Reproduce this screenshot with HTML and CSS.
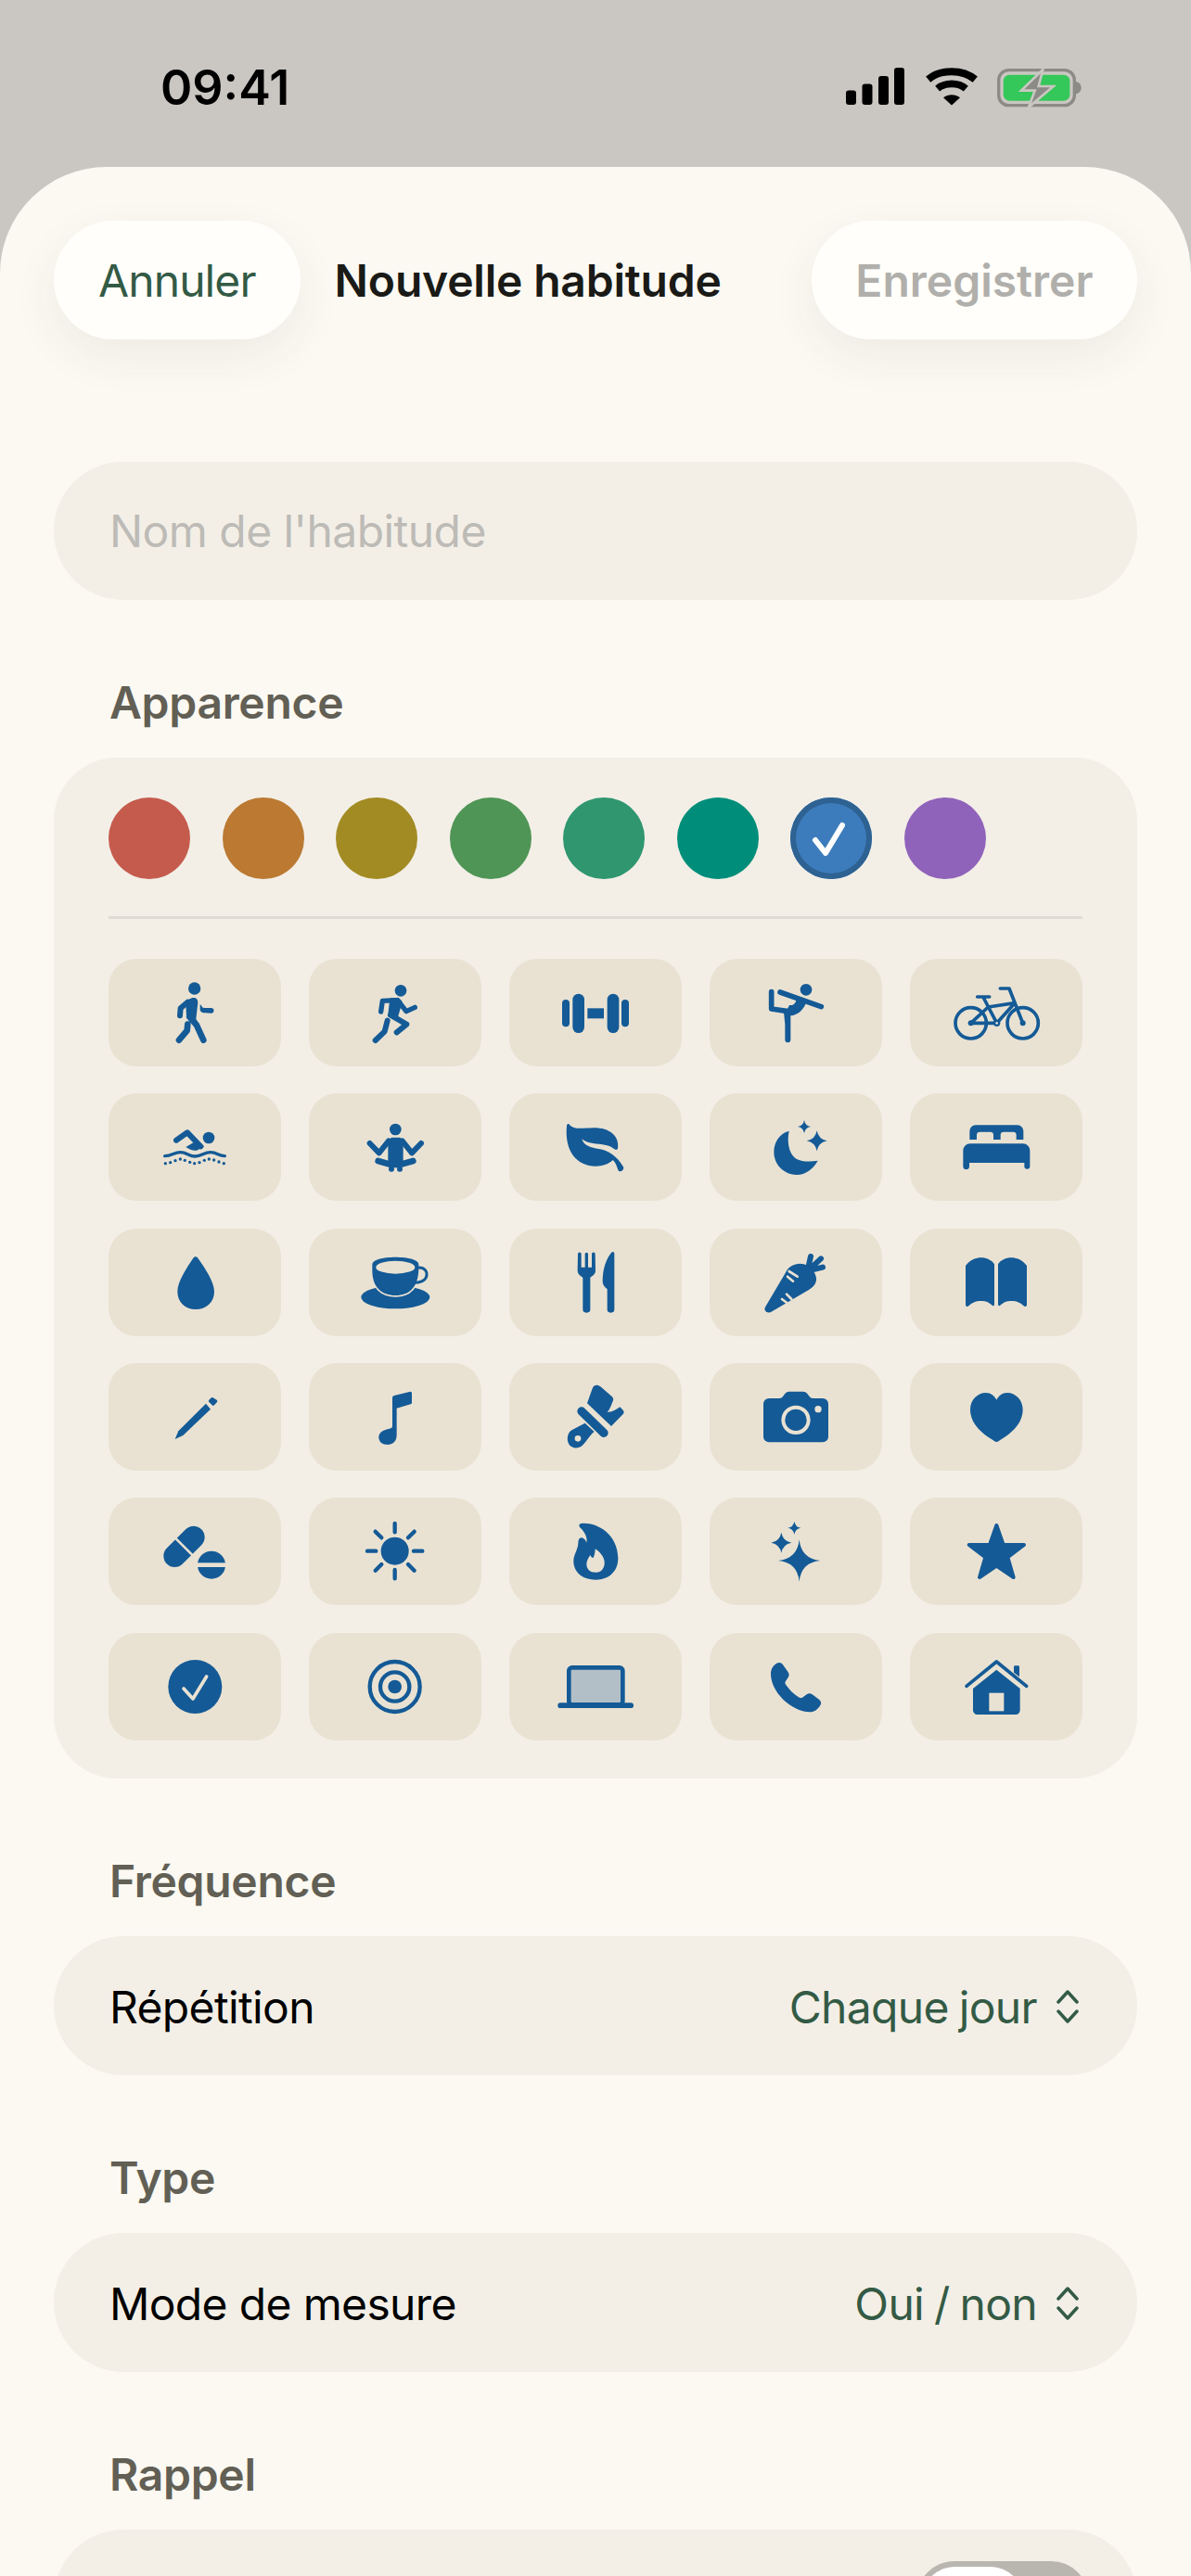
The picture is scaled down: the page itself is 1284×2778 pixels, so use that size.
FILE: index.html
```html
<!DOCTYPE html>
<html lang="fr">
<head>
    <meta charset="UTF-8">
    <meta name="viewport" content="width=device-width, initial-scale=1.0">
    <title>Nouvelle habitude</title>
    <link rel="stylesheet" href="styles.css">
</head>
<body>
    <div class="status-bar">
        <span class="time">09:41</span>
        <div class="status-icons">
            <svg class="signal" viewBox="0 0 63 40" fill="#000">
                <rect x="0" y="24.5" width="11" height="15.5" rx="3"/>
                <rect x="17.5" y="17.5" width="11" height="22.5" rx="3"/>
                <rect x="35" y="9" width="11" height="31" rx="3"/>
                <rect x="52" y="0" width="11" height="40" rx="3"/>
            </svg>
            <svg class="wifi" viewBox="0 0 168 122">
                <path d="M8 38C48 4 120 4 160 38" fill="none" stroke="#000" stroke-width="24"/>
                <path d="M38 68C62 47 106 47 130 68" fill="none" stroke="#000" stroke-width="23"/>
                <path d="M57 97C72 85 96 85 111 97L84 122Z" fill="#000"/>
            </svg>
            <svg class="battery" viewBox="0 0 272 130">
                <rect x="5" y="8" width="245" height="114" rx="32" fill="none" stroke="#8b8a86" stroke-width="10"/>
                <rect x="20" y="23" width="215" height="84" rx="20" fill="#34c759"/>
                <path d="M255 45C267 48 272 56 272 65C272 74 267 82 255 85Z" fill="#8b8a86"/>
                <path d="M148 6L78 74H122L102 128L182 60H134Z" fill="#8b8a86" stroke="#cac7c2" stroke-width="8"/>
            </svg>
        </div>
    </div>

    <main class="sheet">
        <header class="nav">
            <button class="pill-btn cancel">Annuler</button>
            <h1 class="nav-title">Nouvelle habitude</h1>
            <button class="pill-btn save">Enregistrer</button>
        </header>

        <div class="name-field">Nom de l'habitude</div>

        <section class="group">
            <h2 class="group-label">Apparence</h2>
            <div class="card">
                <div class="swatches">
                    <span class="swatch red"></span>
                    <span class="swatch orange"></span>
                    <span class="swatch olive"></span>
                    <span class="swatch green"></span>
                    <span class="swatch emerald"></span>
                    <span class="swatch teal"></span>
                    <span class="swatch blue selected">
                        <svg viewBox="0 0 88 88"><path d="M27 46L38 60L56 30" fill="none" stroke="#fff" stroke-width="6" stroke-linecap="round" stroke-linejoin="round"/></svg>
                    </span>
                    <span class="swatch purple"></span>
                </div>
                <div class="divider"></div>
                <div class="icon-grid">
                    <!-- walk -->
                    <div class="tile"><svg viewBox="0 0 558 348">
                        <circle cx="278" cy="96" r="20"/>
                        <path d="M250 145C256 124 290 116 289 142L283 195L294 212L272 208L252 186Z"/>
                        <path class="ln" stroke-width="20" d="M262 188L285 215L307 263"/>
                        <path class="ln" stroke-width="20" d="M256 212L254 232L228 263"/>
                        <path class="ln" stroke-width="18" d="M256 140L233 160L231 184"/>
                        <path d="M296 146L305 158C312 160 325 159 332 159A8.5 8.5 0 0 1 332 176L312 175C300 175 295 170 296 160Z"/>
                    </svg></div>
                    <!-- run -->
                    <div class="tile"><svg viewBox="0 0 558 348">
                        <circle cx="297" cy="103" r="19"/>
                        <path d="M262 127L285 127C292 127 298 132 302 140L288 188L256 180Z"/>
                        <path class="ln" stroke-width="16" d="M284 134L238 136L233 171"/>
                        <path class="ln" stroke-width="16" d="M287 134L315 170L343 157"/>
                        <path class="ln" stroke-width="18" d="M264 182L316 212L284 238"/>
                        <path class="ln" stroke-width="18" d="M254 200L245 235L215 264"/>
                    </svg></div>
                    <!-- dumbbell -->
                    <div class="tile"><svg viewBox="0 0 558 348">
                        <rect x="171" y="132" width="24" height="88" rx="12"/>
                        <rect x="205" y="113" width="38" height="127" rx="19"/>
                        <rect x="253" y="160" width="53" height="33"/>
                        <rect x="317" y="113" width="38" height="127" rx="19"/>
                        <rect x="363" y="132" width="24" height="88" rx="12"/>
                    </svg></div>
                    <!-- yoga -->
                    <div class="tile"><svg viewBox="0 0 558 348">
                        <circle cx="312" cy="100" r="19"/>
                        <path class="ln" stroke-width="17" d="M228 108L361 155"/>
                        <path class="ln" stroke-width="17" d="M200 107L200 162L254 170"/>
                        <path d="M258 150C270 152 278 144 281 131L312 142C304 166 284 183 262 184L244 178Z"/>
                        <path d="M240 172L262 176V262A9 9 0 0 1 244 262V212Z"/>
                    </svg></div>
                    <!-- bike -->
                    <div class="tile"><svg viewBox="0 0 558 348">
                        <g class="ln" stroke-width="11">
                            <circle cx="197" cy="208" r="50"/>
                            <circle cx="365" cy="208" r="50"/>
                            <path d="M197 208H281L339 143L253 156L197 208"/>
                            <path d="M218 123H257M238 126L281 208"/>
                            <path d="M292 96H321L365 208"/>
                        </g>
                        <circle cx="197" cy="208" r="9"/>
                        <circle cx="365" cy="208" r="9"/>
                        <circle cx="281" cy="208" r="11"/>
                        <circle class="cut" cx="281" cy="208" r="4"/>
                    </svg></div>

                    <!-- swim -->
                    <div class="tile"><svg viewBox="0 0 558 348">
                        <circle cx="324" cy="144" r="19"/>
                        <path class="ln" stroke-width="18" d="M219 152L255 127L298 172"/>
                        <path d="M250 174L274 160L310 172L285 185C272 186 262 182 250 174Z"/>
                        <path class="ln" stroke-width="10" d="M182 203C205 203 212 191 232 191C254 191 260 204 280 204C302 204 308 191 330 191C352 191 355 203 376 203"/>
                        <g>
                            <circle cx="184" cy="227" r="5"/><circle cx="200" cy="224" r="5"/><circle cx="216" cy="218" r="5"/>
                            <circle cx="232" cy="213" r="5"/><circle cx="247" cy="217" r="5"/><circle cx="263" cy="223" r="5"/>
                            <circle cx="278" cy="227" r="5"/><circle cx="294" cy="224" r="5"/><circle cx="310" cy="217" r="5"/>
                            <circle cx="325" cy="213" r="5"/><circle cx="341" cy="216" r="5"/><circle cx="357" cy="222" r="5"/>
                            <circle cx="373" cy="227" r="5"/>
                        </g>
                    </svg></div>
                    <!-- meditate -->
                    <div class="tile"><svg viewBox="0 0 558 348">
                        <circle cx="280" cy="117" r="19"/>
                        <path d="M256 158C256 150 262 143 272 143H290C300 143 305 150 305 158V232H256Z"/>
                        <path class="ln" stroke-width="18" d="M197 162L227 193L258 154"/>
                        <path class="ln" stroke-width="18" d="M363 162L333 193L302 154"/>
                        <path class="ln" stroke-width="20" d="M224 219L266 231H294L337 219"/>
                        <circle cx="267" cy="245" r="9"/>
                        <circle cx="294" cy="245" r="9"/>
                    </svg></div>
                    <!-- leaf -->
                    <div class="tile"><svg viewBox="0 0 558 348">
                        <path d="M195 101C207 118 235 113 270 112C320 110 358 135 351 180C345 188 335 174 322 170C310 166 300 165 290 164C265 162 245 158 235 147C240 170 265 176 290 180C320 184 350 205 369 238C373 250 358 258 352 248C347 235 345 225 335 216C320 230 300 236 280 236C220 236 178 190 186 105C187 99 192 98 195 101Z"/>
                    </svg></div>
                    <!-- moon -->
                    <div class="tile"><svg viewBox="0 0 558 348">
                        <path d="M257 122C225 130 208 160 208 190C208 235 245 264 282 264C310 264 335 245 350 218C325 222 300 222 280 212C255 195 250 155 257 122Z"/>
                        <path d="M306 87Q309 105 327 108Q309 111 306 129Q303 111 285 108Q303 105 306 87Z"/>
                        <path d="M347 121Q352 149 380 154Q352 159 347 187Q342 159 314 154Q342 149 347 121Z"/>
                    </svg></div>
                    <!-- bed -->
                    <div class="tile"><svg viewBox="0 0 558 348">
                        <path d="M193 150V122A19 19 0 0 1 212 103H348A19 19 0 0 1 367 122V150H344V135A10 10 0 0 0 334 125H303A10 10 0 0 0 293 135V150H270V135A10 10 0 0 0 260 125H226A10 10 0 0 0 216 135V150Z"/>
                        <path d="M172 185A22 22 0 0 1 194 163H366A22 22 0 0 1 388 185V236A9 9 0 0 1 370 236V225H192V236A10 10 0 0 1 172 236Z"/>
                    </svg></div>

                    <!-- drop -->
                    <div class="tile"><svg viewBox="0 0 558 348">
                        <path d="M274 95A9 9 0 0 1 289 95C310 125 342 170 342 203C342 238 316 261 282 261C248 261 223 238 223 203C223 170 254 125 274 95Z"/>
                    </svg></div>
                    <!-- cup -->
                    <div class="tile"><svg viewBox="0 0 558 348">
                        <ellipse cx="280" cy="222" rx="111" ry="37"/>
                        <path class="halo" d="M205 116C205 100 240 92 280 92C320 92 355 100 355 116V135C352 190 325 216 280 216C235 216 205 190 205 135Z"/>
                        <ellipse class="cut" cx="280" cy="125" rx="63" ry="21"/>
                        <path class="ln" stroke-width="9" d="M352 126C375 124 386 140 379 158C373 172 356 175 338 175"/>
                    </svg></div>
                    <!-- fork and knife -->
                    <div class="tile"><svg viewBox="0 0 558 348">
                        <path d="M222 82A5.5 5.5 0 0 1 233 82V125H245V82A5 5 0 0 1 255 82V125H267V82A5.5 5.5 0 0 1 278 82L279 135C279 148 270 152 262 158V262A12 10 0 0 1 238 262V158C230 152 221 148 221 135Z"/>
                        <path d="M330 78C335 73 340 75 340 82V262A11.500 10 0 0 1 317 262V195C310 190 302 182 302 170C302 130 315 95 330 78Z"/>
                    </svg></div>
                    <!-- carrot -->
                    <div class="tile"><svg viewBox="0 0 558 348">
                        <path class="ln" stroke-width="18" d="M320 122L327 90M330 125L360 97M335 132L366 125"/>
                        <path d="M181 252L247 140C258 118 290 105 317 120C335 130 350 155 344 172C340 185 330 192 322 197L202 268C188 278 172 265 181 252Z"/>
                        <path class="cut-ln" d="M252 155L270 170M257 138L284 155M234 228L250 240M249 212L265 228"/>
                    </svg></div>
                    <!-- book -->
                    <div class="tile"><svg viewBox="0 0 558 348">
                        <path d="M180 120C195 100 215 94 230 94C248 94 265 102 273 115V246A4 4 0 0 1 267 249C255 238 245 234 230 234C212 234 200 240 190 250C186 254 180 252 180 246Z"/>
                        <path transform="matrix(-1 0 0 1 558 0)" d="M180 120C195 100 215 94 230 94C248 94 265 102 273 115V246A4 4 0 0 1 267 249C255 238 245 234 230 234C212 234 200 240 190 250C186 254 180 252 180 246Z"/>
                    </svg></div>

                    <!-- pencil -->
                    <div class="tile"><svg viewBox="0 0 558 348">
                        <path d="M226 220L315 131L330 149L241 234L215 246Z"/>
                        <path d="M331 113A5 5 0 0 1 338 112L350 119A5 5 0 0 1 351 126L342 136A5 5 0 0 1 335 136L325 126A5 5 0 0 1 325 119Z"/>
                    </svg></div>
                    <!-- note -->
                    <div class="tile"><svg viewBox="0 0 558 348">
                        <path d="M270 112A8 8 0 0 1 276 105L328 92A5 5 0 0 1 333 97V128A5 5 0 0 1 329 133L284 146V232C284 255 270 264 255 264C238 264 226 255 226 240C226 226 240 216 258 213C265 212 270 210 270 205Z"/>
                    </svg></div>
                    <!-- brush -->
                    <div class="tile"><svg viewBox="0 0 558 348">
                        <path d="M252 130L268 85C272 70 285 68 295 76L332 108C338 114 338 118 333 128C328 140 325 150 317 158C330 160 345 152 358 142L368 152C372 158 372 162 366 167L330 204Z"/>
                        <path class="ln" stroke-width="28" d="M234 156L306 226"/>
                        <path d="M245 194L205 215C190 222 186 240 190 255C195 275 220 280 235 268C250 255 262 230 275 222Z"/>
                        <circle class="cut" cx="222" cy="244" r="10"/>
                    </svg></div>
                    <!-- camera -->
                    <div class="tile"><svg viewBox="0 0 558 348">
                        <path d="M192 114H225C232 114 236 110 240 104C245 96 250 92 258 92H302C310 92 315 96 320 104C324 110 328 114 335 114H366A18 18 0 0 1 384 132V238A18 18 0 0 1 366 256H192A18 18 0 0 1 174 238V132A18 18 0 0 1 192 114Z"/>
                        <circle class="cut-ring" cx="279" cy="184" r="41"/>
                        <circle class="cut" cx="351" cy="149" r="11"/>
                    </svg></div>
                    <!-- heart -->
                    <div class="tile"><svg viewBox="0 0 558 348">
                        <path d="M280 255C275 255 272 252 265 247C230 225 195 195 195 150C195 118 220 96 245 96C262 96 273 106 280 119C287 106 298 96 315 96C340 96 365 118 365 150C365 195 330 225 295 247C288 252 285 255 280 255Z"/>
                    </svg></div>

                    <!-- pills -->
                    <div class="tile"><svg viewBox="0 0 558 348">
                        <path class="ln" stroke-width="72" d="M214 189L275 128"/>
                        <path class="cut-ln butt" d="M216 131L276 191"/>
                        <circle cx="333" cy="218" r="45"/>
                        <rect class="cut" x="284" y="211" width="98" height="14"/>
                    </svg></div>
                    <!-- sun -->
                    <div class="tile"><svg viewBox="0 0 558 348">
                        <circle cx="278" cy="173" r="45"/>
                        <path class="ln" stroke-width="13" d="M278 84V112M278 234V262M189 173H217M339 173H367M215 110L235 130M321 216L341 236M341 110L321 130M235 216L215 236"/>
                    </svg></div>
                    <!-- flame -->
                    <div class="tile"><svg viewBox="0 0 558 348">
                        <path d="M232 84C280 78 350 115 352 195C353 240 320 266 280 266C240 266 208 245 208 205C208 185 222 170 223 148C223 135 228 128 235 130C242 132 248 138 250 146C254 130 244 110 230 98C224 92 226 85 232 84Z"/>
                        <path class="cut" d="M278 166C300 180 310 200 308 215C306 232 295 242 280 242C262 242 250 232 250 215C250 205 256 195 262 186C264 192 268 195 272 195C276 185 278 175 278 166Z"/>
                    </svg></div>
                    <!-- sparkles -->
                    <div class="tile"><svg viewBox="0 0 558 348">
                        <path d="M290 136Q296 198 358 204Q296 210 290 272Q284 210 222 204Q284 198 290 136Z"/>
                        <path d="M232 113Q237 141 265 146Q237 151 232 179Q227 151 199 146Q227 141 232 113Z"/>
                        <path d="M274 77Q277 95 295 98Q277 101 274 119Q271 101 253 98Q271 95 274 77Z"/>
                    </svg></div>
                    <!-- star -->
                    <div class="tile"><svg viewBox="0 0 558 348">
                        <path class="solid" d="M280 90L302 153L369 153L316 193L335 258L280 221L225 258L244 193L191 153L258 153Z"/>
                    </svg></div>

                    <!-- check -->
                    <div class="tile"><svg viewBox="0 0 558 348">
                        <circle cx="280" cy="174" r="87"/>
                        <path class="cut-ln round" d="M243 180L273 213L317 141"/>
                    </svg></div>
                    <!-- target -->
                    <div class="tile"><svg viewBox="0 0 558 348">
                        <circle class="ln" stroke-width="13" cx="278" cy="174" r="81"/>
                        <circle class="ln" stroke-width="13" cx="278" cy="174" r="47"/>
                        <circle cx="278" cy="174" r="22"/>
                    </svg></div>
                    <!-- laptop -->
                    <div class="tile"><svg viewBox="0 0 558 348">
                        <rect class="screen" x="193" y="112" width="174" height="120" rx="10"/>
                        <rect x="157" y="226" width="245" height="17" rx="8.500"/>
                    </svg></div>
                    <!-- phone -->
                    <div class="tile"><svg viewBox="0 0 558 348">
                        <path d="M216 99C224 94 232 96 237 103L253 125C258 132 258 138 254 144L246 156C243 160 244 164 247 168C258 184 272 198 288 208C292 211 296 211 300 209L314 199C320 195 326 195 332 199L354 215C361 220 362 228 358 234C350 248 338 256 325 256C262 254 198 190 198 132C198 118 205 106 216 99Z"/>
                    </svg></div>
                    <!-- house -->
                    <div class="tile"><svg viewBox="0 0 558 348">
                        <path d="M336 128V110A4 4 0 0 1 340 106H350A4 4 0 0 1 354 110V142Z"/>
                        <path class="ln" stroke-width="11" d="M183 172L280 93L377 172"/>
                        <path d="M280 119L356 180V250A14 14 0 0 1 342 264H218A14 14 0 0 1 204 250V180Z"/>
                        <rect class="cut" x="256" y="194" width="48" height="59"/>
                    </svg></div>
                </div>
            </div>
        </section>

        <section class="group">
            <h2 class="group-label">Fréquence</h2>
            <div class="row">
                <span>Répétition</span>
                <span class="row-value">Chaque jour
                    <svg class="chevrons" viewBox="0 0 24 36"><path d="M2 13L12 2L22 13M2 23L12 34L22 23"/></svg>
                </span>
            </div>
        </section>

        <section class="group">
            <h2 class="group-label">Type</h2>
            <div class="row">
                <span>Mode de mesure</span>
                <span class="row-value">Oui / non
                    <svg class="chevrons" viewBox="0 0 24 36"><path d="M2 13L12 2L22 13M2 23L12 34L22 23"/></svg>
                </span>
            </div>
        </section>

        <section class="group">
            <h2 class="group-label">Rappel</h2>
            <div class="row">
                <span></span>
                <span class="toggle"><span class="thumb"></span></span>
            </div>
        </section>
    </main>
</body>
</html>
```

FILE: styles.css
```css
html, body {
    margin: 0;
    padding: 0;
    height: 2778px;
    overflow: hidden;
    background: #cac7c2;
    font-family: "Inter", "Liberation Sans", sans-serif;
    font-size: 48px;
    color: #000;
}

/* Status bar */
.status-bar {
    height: 180px;
    box-sizing: border-box;
    padding: 65px 118px 0 173px;
    display: flex;
    justify-content: space-between;
    align-items: flex-start;
}
.time {
    font-size: 52px;
    font-weight: 600;
    line-height: 60px;
    color: #000;
}
.status-icons {
    display: flex;
    align-items: flex-start;
    margin-top: 8px;
}
.signal {
    width: 63px;
    height: 40px;
}
.wifi {
    width: 56px;
    height: 40.600px;
    margin-left: 23px;
}
.battery {
    width: 90.700px;
    height: 43.300px;
    margin-left: 21px;
}

/* Sheet */
.sheet {
    height: 2598px;
    box-sizing: border-box;
    background: #fbf9f2;
    border-radius: 115px 115px 0 0;
    padding: 58px 58px 0;
}
.nav {
    display: flex;
    align-items: center;
}
.pill-btn {
    height: 128px;
    border: 0;
    border-radius: 64px;
    background: #fffefa;
    box-shadow: 0 18px 50px rgba(60, 50, 30, 0.07);
    font-family: inherit;
    font-size: 48px;
}
.cancel {
    padding: 0 48px;
    color: #335a45;
    letter-spacing: -0.9px;
}
.save {
    padding: 0 47.500px;
    color: #b0afab;
    font-weight: 600;
}
.nav-title {
    margin: 0 auto 0 37px;
    font-size: 48px;
    font-weight: 600;
    letter-spacing: -0.2px;
    color: #1a1a17;
}
.name-field {
    margin-top: 132px;
    height: 149px;
    line-height: 150px;
    padding: 0 60px;
    border-radius: 74px;
    background: #f3efe7;
    color: #bdbbb6;
    letter-spacing: -0.55px;
}

/* Sections */
.group {
    margin-top: 83px;
}
.group-label {
    margin: 0 0 31px 60px;
    height: 56px;
    line-height: 56px;
    font-size: 48px;
    font-weight: 600;
    letter-spacing: -0.3px;
    color: #625f55;
}
.card {
    padding: 43px 59px 41px 59px;
    border-radius: 68px;
    background: #f3efe7;
}
.swatches {
    display: flex;
    gap: 34.500px;
}
.swatch {
    width: 88px;
    height: 88px;
    box-sizing: border-box;
    border-radius: 50%;
}
.red { background: #c55b4d; }
.orange { background: #bb7932; }
.olive { background: #a28b23; }
.green { background: #4f9555; }
.emerald { background: #2f9670; }
.teal { background: #008e7a; }
.blue { background: #3d7cbc; }
.purple { background: #9063ba; }
.selected {
    box-shadow: inset 0 0 0 6px #2e6292;
}
.selected svg {
    display: block;
    width: 88px;
    height: 88px;
}
.divider {
    height: 3px;
    margin: 40px 0 43px;
    background: #e0dcd5;
}
.icon-grid {
    display: grid;
    grid-template-columns: repeat(5, 186px);
    grid-auto-rows: 116px;
    column-gap: 30px;
    row-gap: 29.330px;
}
.tile {
    border-radius: 30px;
    background: #e9e2d3;
}
.tile svg {
    display: block;
    width: 100%;
    height: 100%;
    fill: #145a96;
}
.tile .ln {
    fill: none;
    stroke: #145a96;
    stroke-linecap: round;
    stroke-linejoin: round;
}
.tile .cut {
    fill: #e9e2d3;
}
.tile .cut-ln {
    fill: none;
    stroke: #e9e2d3;
    stroke-width: 8;
    stroke-linecap: round;
}
.tile .cut-ln.butt {
    stroke-linecap: butt;
}
.tile .cut-ln.round {
    stroke-width: 11;
    stroke-linejoin: round;
}
.tile .cut-ring {
    fill: none;
    stroke: #e9e2d3;
    stroke-width: 12;
}
.tile .halo {
    stroke: #e9e2d3;
    stroke-width: 10;
    paint-order: stroke;
}
.tile .solid {
    stroke: #145a96;
    stroke-width: 12;
    stroke-linejoin: round;
}
.tile .screen {
    fill: #b3bfc7;
    stroke: #145a96;
    stroke-width: 14;
}

/* Rows */
.row {
    height: 150px;
    box-sizing: border-box;
    padding: 3px 60px 0;
    display: flex;
    justify-content: space-between;
    align-items: center;
    border-radius: 75px;
    background: #f3efe7;
    letter-spacing: -0.65px;
}
.row-value {
    display: flex;
    align-items: center;
    gap: 21px;
    color: #335a45;
    letter-spacing: -0.65px;
    word-spacing: -2px;
}
.chevrons {
    width: 24px;
    height: 36px;
    margin-right: 3px;
    fill: none;
    stroke: #335a45;
    stroke-width: 3.500;
    stroke-linecap: round;
    stroke-linejoin: round;
}
.toggle {
    width: 186px;
    height: 82px;
    box-sizing: border-box;
    margin: -3px -8px 0 0;
    padding: 6px;
    border-radius: 41px;
    background: #b9b6b0;
}
.thumb {
    display: block;
    width: 109px;
    height: 70px;
    border-radius: 35px;
    background: #fff;
}
```
